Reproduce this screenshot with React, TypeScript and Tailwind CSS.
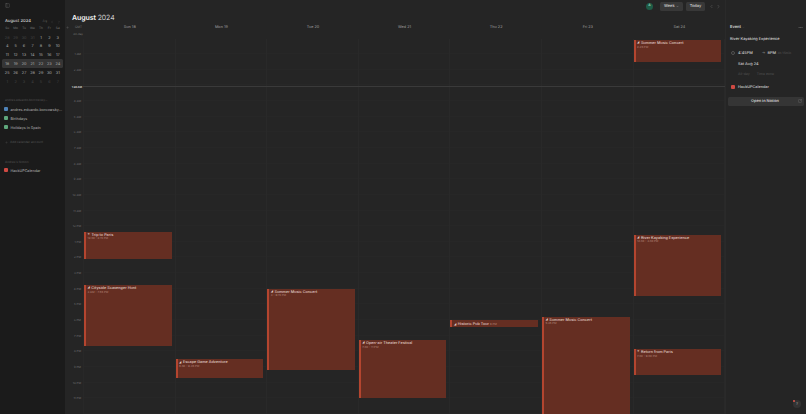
import { ChevronDown, ChevronLeft, ChevronRight, Ellipsis, PanelLeft, Plus, SquareArrowOutUpRight } from "lucide-react";

type CalEvent = {
  title: string;
  time: string;
  start: number;
  end: number;
  icon?: string;
};

const HOUR_HEIGHT = 15.65;

const DAYS: { label: string; events: CalEvent[] }[] = [
  {
    label: "Sun 18",
    events: [
      { title: "Trip to Paris", time: "12:30 – 2:15 PM", start: 12.35, end: 14.1, icon: "✈" },
      { title: "Cityside Scavenger Hunt", time: "4 AM – 7:55 PM", start: 15.75, end: 19.66 },
    ],
  },
  {
    label: "Mon 19",
    events: [{ title: "Escape Game Adventure", time: "8:30 – 9:45 PM", start: 20.5, end: 21.7 }],
  },
  {
    label: "Tue 20",
    events: [{ title: "Summer Music Concert", time: "4 – 9:15 PM", start: 16, end: 21.18 }],
  },
  {
    label: "Wed 21",
    events: [{ title: "Open-air Theater Festival", time: "7:30 – 11 PM", start: 19.27, end: 22.95 }],
  },
  {
    label: "Thu 22",
    events: [{ title: "Historic Pub Tour", time: "6 PM", start: 18.0, end: 18.45 }],
  },
  {
    label: "Fri 23",
    events: [{ title: "Summer Music Concert", time: "5:45 PM", start: 17.78, end: 24 }],
  },
  {
    label: "Sat 24",
    events: [
      { title: "Summer Music Concert", time: "2:45 PM", start: 0.1, end: 1.47 },
      { title: "River Kayaking Experience", time: "12:30 – 4:30 PM", start: 12.53, end: 16.45 },
      { title: "Return from Paris", time: "7:30 – 9:30 PM", start: 19.84, end: 21.5, icon: "✈" },
    ],
  },
];

const HOURS = [
  "",
  "1 AM",
  "2 AM",
  "",
  "4 AM",
  "5 AM",
  "6 AM",
  "7 AM",
  "8 AM",
  "9 AM",
  "10 AM",
  "11 AM",
  "12 PM",
  "1 PM",
  "2 PM",
  "3 PM",
  "4 PM",
  "5 PM",
  "6 PM",
  "7 PM",
  "8 PM",
  "9 PM",
  "10 PM",
  "11 PM",
];

const WEEKDAYS = ["Su", "Mo", "Tu", "We", "Th", "Fr", "Sa"];

const MONTH_WEEKS = [
  [28, 29, 30, 31, 1, 2, 3],
  [4, 5, 6, 7, 8, 9, 10],
  [11, 12, 13, 14, 15, 16, 17],
  [18, 19, 20, 21, 22, 23, 24],
  [25, 26, 27, 28, 29, 30, 31],
  [1, 2, 3, 4, 5, 6, 7],
];

function MiniCalendar() {
  return (
    <div className="px-[2px]">
      <div className="flex h-[8px] items-end justify-between pl-[3px] pr-[2px]">
        <span className="text-[4.2px] font-medium leading-[5px] text-neutral-300">August 2024</span>
        <div className="flex items-center gap-[3px] text-neutral-600">
          <span className="text-[3.4px] leading-[5px]">Ag</span>
          <ChevronLeft size={4} />
          <ChevronRight size={4} />
        </div>
      </div>
      <div className="grid h-[9px] grid-cols-7 items-center px-[1px] text-center text-[3.2px] text-neutral-500">
        {WEEKDAYS.map((day) => (
          <span key={day}>{day}</span>
        ))}
      </div>
      {MONTH_WEEKS.map((week, row) => (
        <div
          key={row}
          className={`grid h-[8.8px] grid-cols-7 items-center rounded-[1.5px] px-[1px] text-center text-[3.8px] font-medium text-neutral-400 ${
            row === 3 ? "bg-[#353535]" : ""
          }`}
        >
          {week.map((day, col) => {
            const faded = (row === 0 && day > 20) || row === 5;
            return (
              <span key={col} className={faded ? "text-neutral-700" : ""}>
                {day}
              </span>
            );
          })}
        </div>
      ))}
    </div>
  );
}

function CalendarRow({ color, label }: { color: string; label: string }) {
  return (
    <div className="flex h-[9px] items-center gap-[2.5px] pl-[4px]">
      <span className={`h-[4px] w-[4px] rounded-[1px] ${color}`} />
      <span className="text-[3.7px] font-medium text-neutral-400">{label}</span>
    </div>
  );
}

function Sidebar() {
  return (
    <aside className="flex w-[65px] shrink-0 flex-col bg-[#1b1b1b]">
      <div className="flex h-[16px] items-start pl-[5px] pt-[3px] text-neutral-500">
        <PanelLeft size={5} strokeWidth={1.5} />
      </div>
      <MiniCalendar />
      <div className="mt-[12px] pl-[5px] text-[3.1px] text-neutral-600">andres.eduardo.borcowsky...</div>
      <div className="mt-[2.5px]">
        <CalendarRow color="bg-[#4f83b8]" label="andres.eduardo.borcowsky..." />
        <CalendarRow color="bg-[#5fa77c]" label="Birthdays" />
        <CalendarRow color="bg-[#5fa77c]" label="Holidays in Spain" />
      </div>
      <div className="mt-[8px] flex items-center gap-[2px] pl-[5px] text-[3.2px] text-neutral-600">
        <Plus size={3} />
        Add calendar account
      </div>
      <div className="mt-[15.5px] pl-[5px] text-[3.1px] text-neutral-600">Andres's Notion</div>
      <div className="mt-[1px]">
        <CalendarRow color="bg-[#cf4a43]" label="HackUPCalendar" />
      </div>
    </aside>
  );
}

function EventCard({ event }: { event: CalEvent }) {
  const height = (event.end - event.start) * HOUR_HEIGHT;
  const inline = height < 10;
  return (
    <div
      className={`absolute left-0 right-[3px] overflow-hidden border-l-2 border-[#b4452f] bg-[#652e22] pl-[1.5px] pt-[1px] leading-none ${
        inline ? "flex items-center gap-[1px]" : ""
      }`}
      style={{ top: event.start * HOUR_HEIGHT, height }}
    >
      <div className="flex items-center gap-[1.5px] text-[3.8px] font-medium text-[#e3d2cb]">
        <span className="text-[3px]">{event.icon ?? "◢"}</span>
        {event.title}
      </div>
      <div className={`text-[2.8px] text-[#b78a7d] ${inline ? "" : "mt-[0.8px]"}`}>{event.time}</div>
    </div>
  );
}

function TopBar() {
  return (
    <div className="flex h-[12px] items-center justify-end gap-[3px] pr-[4px]">
      <span className="mr-[4px] flex h-[7px] w-[7px] items-center justify-center rounded-full bg-[#1f5c47] text-[3.4px] font-semibold text-[#8fd0b4]">
        A
      </span>
      <div className="flex h-[9px] w-[23px] items-center justify-center gap-[1.5px] rounded-[1.5px] bg-[#383838] text-[4px] font-medium text-neutral-300">
        Week
        <ChevronDown size={3} />
      </div>
      <div className="flex h-[9px] w-[19px] items-center justify-center rounded-[1.5px] bg-[#383838] text-[4px] font-medium text-neutral-300">
        Today
      </div>
      <div className="ml-[1px] flex gap-[2px] text-neutral-500">
        <ChevronLeft size={5} />
        <ChevronRight size={5} />
      </div>
    </div>
  );
}

function WeekGrid() {
  return (
    <div className="relative flex flex-1 overflow-hidden">
      <div className="w-[19px] shrink-0 border-r border-[#282828]">
        {HOURS.map((hour, index) => (
          <div
            key={index}
            className="-translate-y-[1.5px] pr-[2px] text-right text-[2.9px] leading-none text-neutral-500"
            style={{ height: HOUR_HEIGHT }}
          >
            {hour}
          </div>
        ))}
      </div>
      {DAYS.map((day) => (
        <div key={day.label} className="relative w-[91.6px] shrink-0 border-r border-[#292929]">
          {HOURS.map((_, index) => (
            <div key={index} className="border-b border-[#272727]" style={{ height: HOUR_HEIGHT }} />
          ))}
          {day.events.map((event) => (
            <EventCard key={event.title + event.start} event={event} />
          ))}
        </div>
      ))}
      <div className="absolute left-0 right-0 top-[47px] flex items-center">
        <span className="w-[18px] pr-[1px] text-right text-[2.8px] font-semibold leading-none text-neutral-300">
          1:46AM
        </span>
        <div className="h-px flex-1 bg-[#3a3a3a]" />
      </div>
    </div>
  );
}

function DetailPanel() {
  return (
    <aside className="relative flex w-[81px] shrink-0 flex-col border-l border-[#2a2a2a] bg-[#252525] pl-[4px] pr-[2px] pt-[24px]">
      <div className="flex h-[6px] items-center justify-between pr-[1px]">
        <span className="flex items-center gap-[1.5px] text-[4px] font-semibold text-neutral-300">
          Event
          <ChevronDown size={3} className="text-neutral-600" />
        </span>
        <Ellipsis size={5} className="text-neutral-500" />
      </div>
      <div className="mt-[5.5px] text-[3.9px] font-medium text-neutral-300">River Kayaking Experience</div>
      <div className="mt-[9px] flex items-center text-[3.9px] font-medium text-neutral-300">
        <span className="ml-[1px] h-[4px] w-[4px] rounded-full border-[0.5px] border-neutral-600" />
        <span className="ml-[3px]">4:45PM</span>
        <span className="ml-[9px] mr-[2px] text-neutral-500">→</span>
        <span>8PM</span>
        <span className="ml-[1.5px] text-[3.2px] text-neutral-600">4h 15min</span>
      </div>
      <div className="mt-[4.5px] pl-[8px] text-[3.9px] font-medium text-neutral-300">Sat Aug 24</div>
      <div className="mt-[5px] flex gap-[7px] pl-[8px] text-[3.5px] text-neutral-600">
        <span>All-day</span>
        <span>Time zone</span>
      </div>
      <div className="mt-[7px] flex items-center gap-[3px] pl-[1px] text-[3.8px] font-medium text-neutral-300">
        <span className="h-[4px] w-[4px] rounded-[1px] bg-[#cf4a43]" />
        HackUPCalendar
      </div>
      <div className="-ml-[2px] mt-[7px] flex h-[9px] items-center justify-center rounded-[1.5px] bg-[#353535] text-[3.9px] font-semibold text-neutral-300">
        <span className="ml-[4px] flex-1 text-center">Open in Notion</span>
        <SquareArrowOutUpRight size={4} className="mr-[2px] text-neutral-500" />
      </div>
      <div className="absolute bottom-[6px] right-[5px] flex h-[8px] w-[8px] items-center justify-center rounded-full bg-[#333333] text-[4px] text-neutral-400">
        ?
        <span className="absolute left-0 top-0 h-[2px] w-[2px] rounded-full bg-[#e2574c]" />
      </div>
    </aside>
  );
}

export default function App() {
  return (
    <div
      className="flex h-[414px] w-[806px] overflow-hidden bg-[#252525] antialiased [text-rendering:geometricPrecision]"
      style={{ fontFamily: "Inter, 'Liberation Sans', sans-serif" }}
    >
      <Sidebar />
      <main className="flex w-[660px] shrink-0 flex-col">
        <TopBar />
        <div className="h-[12px] pl-[7px] text-[7px] leading-[12px] tracking-[-0.1px] text-neutral-100">
          <span className="font-semibold">August</span> <span className="font-light">2024</span>
        </div>
        <div className="flex h-[6px] items-center text-[3.8px] text-neutral-400">
          <div className="flex w-[19px] shrink-0 items-center justify-between pl-[1px] pr-[2px] text-neutral-500">
            <Plus size={3} />
            <span className="text-[3px]">GMT</span>
          </div>
          {DAYS.map((day) => (
            <div key={day.label} className="w-[91.6px] shrink-0 text-center">
              {day.label}
            </div>
          ))}
        </div>
        <div className="flex h-[8.5px] items-center">
          <span className="w-[19px] pr-[1px] text-right text-[2.9px] text-neutral-500">All-day</span>
        </div>
        <WeekGrid />
      </main>
      <DetailPanel />
    </div>
  );
}
